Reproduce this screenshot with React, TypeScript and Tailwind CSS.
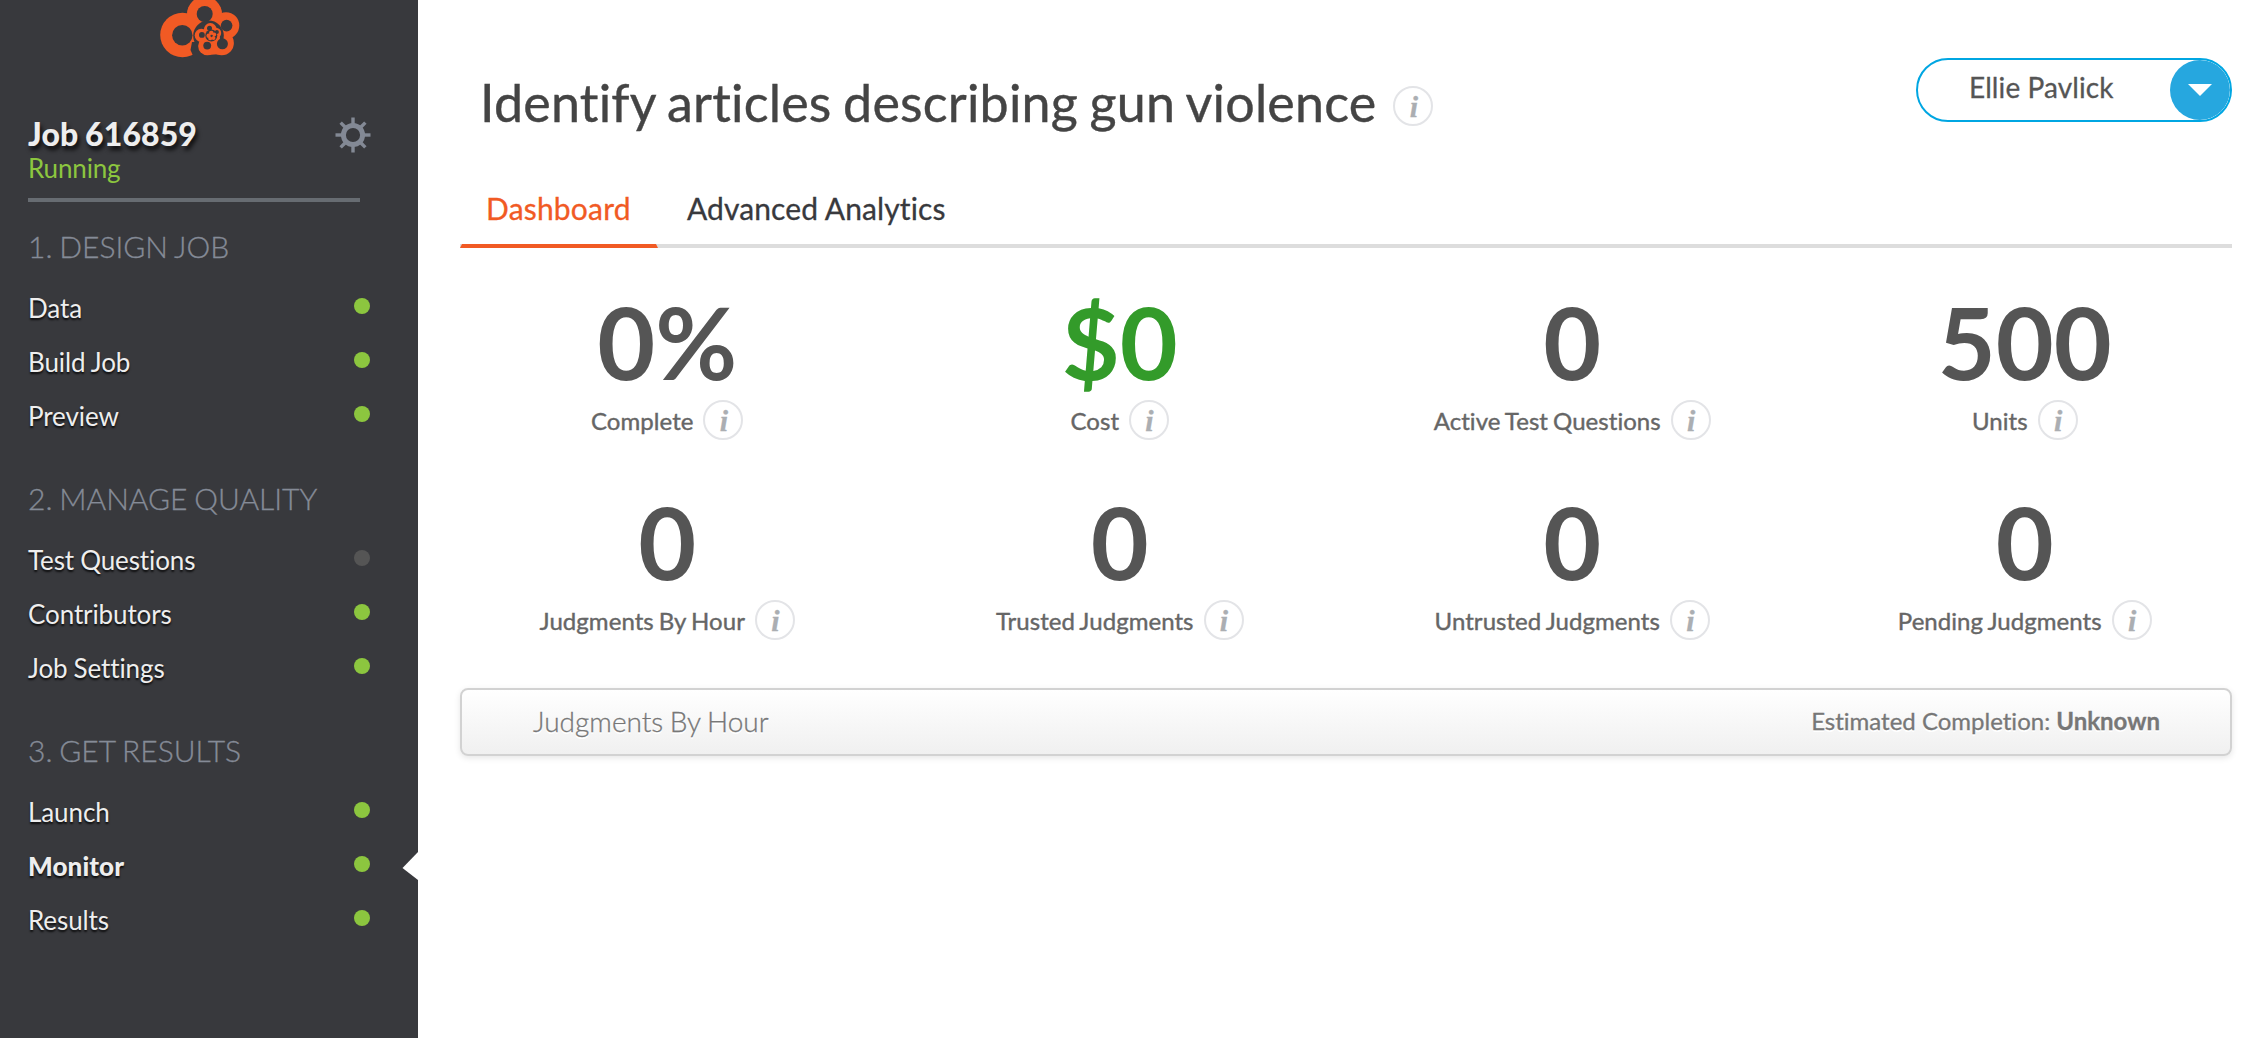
import React from 'react';

function Logo() {
  return (
    <svg className="ml-[160px] block h-[58px] w-[80px]" viewBox="160 0 80 58">
      <g fill="#f15a24">
        <circle cx="182.5" cy="35" r="22.3" />
        <circle cx="204.5" cy="14" r="17.5" />
        <circle cx="226" cy="25.5" r="13.3" />
        <circle cx="221.7" cy="43" r="12.2" />
        <path d="M186 20L206 20L200 34L186 36Z" />
      </g>
      <g fill="#38393d">
        <circle cx="182.3" cy="35.2" r="10.2" />
        <circle cx="204.7" cy="14" r="8" />
        <circle cx="226.6" cy="25.6" r="5.8" />
        <circle cx="208.5" cy="35.8" r="15.3" />
        <path d="M192 42L204 42L203 58L194 58L190.5 50Z" />
      </g>
      <g fill="#f15a24">
        <circle cx="207.3" cy="46" r="9.2" />
        <circle cx="201.3" cy="35.3" r="6.6" />
        <circle cx="210.3" cy="29.5" r="6.4" />
        <circle cx="216" cy="33" r="5.2" />
        <circle cx="213" cy="38" r="7" />
        <path d="M209 47L218 40L221 54L208 55Z" />
      </g>
      <g fill="#38393d">
        <circle cx="222.4" cy="43.8" r="5.5" />
        <circle cx="207.2" cy="45.6" r="3.9" />
        <circle cx="201.9" cy="34.9" r="2.9" />
        <circle cx="209.5" cy="28.3" r="2.5" />
        <circle cx="216.9" cy="32" r="2" />
        <circle cx="211.3" cy="35.5" r="6" />
      </g>
      <g fill="#f15a24">
        <circle cx="208.7" cy="35.7" r="2.3" />
        <circle cx="211.3" cy="33" r="2.3" />
        <circle cx="214.2" cy="34.6" r="2" />
        <circle cx="213.4" cy="38" r="2" />
        <circle cx="210.2" cy="38.4" r="1.9" />
      </g>
      <circle cx="211.5" cy="35.7" r="1" fill="#38393d" />
    </svg>
  );
}

function Gear() {
  return (
    <svg className="h-9 w-9" viewBox="-18 -18 36 36">
      <circle r="9.6" fill="none" stroke="#838995" strokeWidth="5" />
      {[0, 45, 90, 135, 180, 225, 270, 315].map((a) => (
        <rect key={a} x="-1.7" y="-17.5" width="3.4" height="7" fill="#838995" transform={`rotate(${a})`} />
      ))}
    </svg>
  );
}

function Info({ className = '' }: { className?: string }) {
  return (
    <span className={`flex h-10 w-10 shrink-0 items-center justify-center rounded-full border-2 border-[#e3e4e7] bg-white ${className}`}>
      <span className="pt-px pl-px font-['Liberation_Serif',serif] text-[30px] leading-[36px] font-bold text-[#abaeb2] italic [-webkit-text-stroke:0.3px]">i</span>
    </span>
  );
}

type Section = { title: string; items: [string, boolean][] };

const sections: Section[] = [
  { title: '1. DESIGN JOB', items: [['Data', true], ['Build Job', true], ['Preview', true]] },
  { title: '2. MANAGE QUALITY', items: [['Test Questions', false], ['Contributors', true], ['Job Settings', true]] },
  { title: '3. GET RESULTS', items: [['Launch', true], ['Monitor', true], ['Results', true]] },
];

const stats = [
  ['0%', 'Complete'],
  ['$0', 'Cost'],
  ['0', 'Active Test Questions'],
  ['500', 'Units'],
  ['0', 'Judgments By Hour'],
  ['0', 'Trusted Judgments'],
  ['0', 'Untrusted Judgments'],
  ['0', 'Pending Judgments'],
];

function Sidebar() {
  return (
    <aside className="h-full w-[418px] shrink-0 bg-[#38393d]">
      <div className="h-[115px]"><Logo /></div>
      <div className="ml-7 flex h-[83px] w-[343px] justify-between">
        <div>
          <div className="h-[37px] text-[32px] leading-[37px] font-black tracking-[0.1px] text-[#eeeeee] [text-shadow:2px_4px_4px_rgba(0,0,0,0.8)] [word-spacing:-1px]">Job 616859</div>
          <div className="text-[26px] leading-8 tracking-[-0.15px] text-[#8cc63f]">Running</div>
        </div>
        <div className="pt-0.5"><Gear /></div>
      </div>
      <div className="ml-7 h-1 w-[332px] bg-[#676c72]" />
      <nav className="-mt-[11px] pl-7">
        {sections.map((s) => (
          <div key={s.title}>
            <div className="h-[90px] pt-[37px] text-[30px] leading-9 font-light text-[#858b97] [-webkit-text-stroke:0.3px] [word-spacing:-1.3px]">{s.title}</div>
            {s.items.map(([name, on]) => (
              <div key={name} className="relative flex h-[54px] items-center justify-between pr-12">
                <span className={`pt-px text-[26px] text-[#eeeeee] [text-shadow:0_2px_2px_rgba(0,0,0,0.8)] ${name === 'Monitor' ? 'font-black tracking-[0.1px]' : 'tracking-[-0.1px] [word-spacing:-0.5px]'}`}>{name}</span>
                <span className={`mb-1 h-4 w-4 rounded-full ${on ? 'bg-[#8cc63f]' : 'bg-[#555555]'}`} />
                {name === 'Monitor' && (
                  <svg className="absolute top-[13px] right-0 h-7 w-4" viewBox="0 0 16 28">
                    <path d="M16 0L0.5 16L16 28Z" fill="#fff" />
                  </svg>
                )}
              </div>
            ))}
          </div>
        ))}
      </nav>
    </aside>
  );
}

export default function App() {
  return (
    <div className="flex h-[1038px] w-full overflow-hidden bg-white font-['Lato',sans-serif] [font-variant-ligatures:none]">
      <Sidebar />
      <main className="min-w-0 flex-1 pt-[58px] pr-8 pl-[42px]">
        <header className="flex h-16 justify-between">
          <div className="flex pt-[14px] pl-5">
            <h1 className="text-[52px] leading-[60px] tracking-[0.2px] text-[#444444] [-webkit-text-stroke:0.4px] [word-spacing:-2px]">Identify articles describing gun violence</h1>
            <Info className="mt-3.5 ml-[17px]" />
          </div>
          <button className="flex h-16 w-[316px] items-center justify-between overflow-hidden rounded-full border-2 border-[#00a6e2] pl-[51px] text-[28px] text-[#555555] [-webkit-text-stroke:0.3px]">
            <span className="-mt-1.5 tracking-[0.1px]">Ellie Pavlick</span>
            <span className="flex h-[60px] w-[60px] items-center justify-center rounded-full bg-[#26a7df]">
              <svg className="h-3.5 w-[26px]" viewBox="0 0 26 14"><path d="M1 1H25L13 13Z" fill="#fff" /></svg>
            </span>
          </button>
        </header>
        <div className="mt-[50px] flex h-[76px] border-b-4 border-[#dddddd] text-[30px] leading-[72px] tracking-[0.1px] [-webkit-text-stroke:0.3px]">
          <div className="relative w-[198px] pl-[26px] tracking-[0.2px] text-[#f15a24]">
            Dashboard
            <svg className="absolute top-[72px] left-0 h-1 w-[198px]" viewBox="0 0 198 4"><path d="M2 0H196L198 4H0Z" fill="#f15a24" /></svg>
          </div>
          <div className="ml-[29px] text-[#38393d]">Advanced Analytics</div>
        </div>
        <div className="-mx-[19px] mt-[42px] grid grid-cols-4 gap-y-[50px]">
          {stats.map(([v, label]) => (
            <div key={label} className="flex h-[150px] flex-col items-center">
              <div className={`h-[110px] text-[100px] leading-[102px] font-bold ${v === '$0' ? 'text-[#339b2a]' : 'text-[#555555]'}`}>{v}</div>
              <div className="flex h-10 text-2xl leading-[41px] tracking-[0.05px] text-[#666666] [-webkit-text-stroke:0.4px] [word-spacing:-1.1px]">
                {label}
                <Info className="ml-2.5" />
              </div>
            </div>
          ))}
        </div>
        <section className="mt-12 flex h-[68px] items-center justify-between rounded-lg border-2 border-[#d2d2d2] bg-linear-to-b from-white to-[#f0f0f0] px-[70px] pb-0.5 text-[#777777] shadow-[0_2px_6px_rgba(0,0,0,0.1)]">
          <span className="pl-px text-[28px] font-light [-webkit-text-stroke:0.3px] [text-shadow:0_2px_0_#fff] [word-spacing:-1px]">Judgments By Hour</span>
          <span className="text-2xl [-webkit-text-stroke:0.3px] [text-shadow:0_2px_0_#fff]">Estimated Completion: <b>Unknown</b></span>
        </section>
      </main>
    </div>
  );
}
